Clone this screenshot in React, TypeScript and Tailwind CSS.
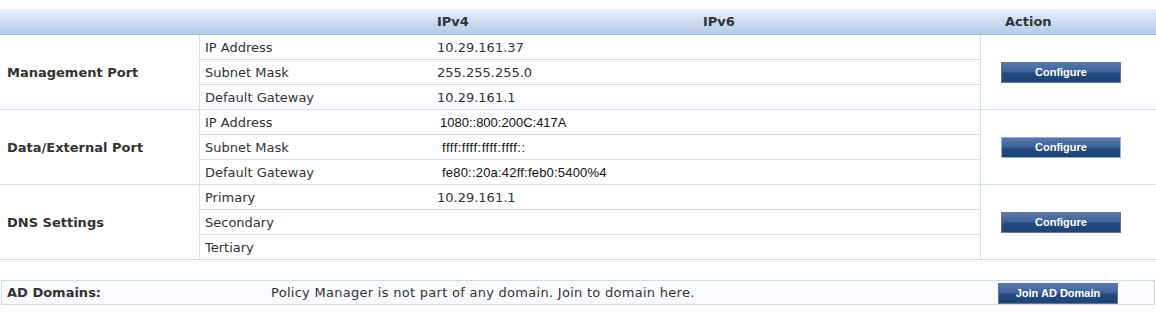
import React from "react";

const font = { fontFamily: '"DejaVu Sans", Verdana, sans-serif' };

function Btn({ label, focus, w = "w-[120px]" }: { label: string; focus?: boolean; w?: string }) {
  return (
    <div
      className={`${w} h-[21px] flex items-center justify-center text-white font-bold text-[11px] border ${
        focus ? "border-[#8eb1e4]" : "border-[#66768c]"
      } bg-[linear-gradient(#5679ad_0%,#3f639b_45%,#234a80_55%,#1e4376_100%)]`}
      style={{ fontFamily: '"Liberation Sans", Arial, sans-serif' }}
    >
      {label}
    </div>
  );
}

type Row = { label: string; value: string; v6?: boolean; off?: string };

function Section({ name, rows, focus }: { name: string; rows: Row[]; focus?: boolean }) {
  return (
    <div className="flex border-b border-[#d3dff0]">
      <div className="w-[200px] border-r border-[#d3dff0] flex items-center pl-[7px] pt-[1px] font-bold">{name}</div>
      <div className="w-[780px] flex flex-col">
        {rows.map((r, i) => (
          <div
            key={i}
            className={`flex items-center pl-[5px] pt-[2px] ${i < rows.length - 1 ? "h-[25px] border-b border-[#d3dff0]" : "h-[24px]"}`}
          >
            <div className="w-[232px]">{r.label}</div>
            <div
              className={r.off ?? ""}
              style={r.v6 ? { fontFamily: '"Liberation Sans", Arial, sans-serif', color: "#111" } : undefined}
            >
              {r.value}
            </div>
          </div>
        ))}
      </div>
      <div className="flex-1 border-l border-[#d3dff0] flex items-center pl-[20px]">
        <Btn label="Configure" focus={focus} />
      </div>
    </div>
  );
}

export default function App() {
  return (
    <div className="w-[1156px] h-[321px] bg-white pt-[9px] text-[13px] text-[#333]" style={font}>
      <div className="flex items-center h-[26px] pt-[1px] border-b border-[#a4b4ca] bg-[linear-gradient(#e7eff9,#b3cae9)] font-bold text-[#333]">
        <div className="w-[437px]" />
        <div className="w-[266px]">IPv4</div>
        <div className="w-[302px]">IPv6</div>
        <div>Action</div>
      </div>
      <Section
        name="Management Port"
        rows={[
          { label: "IP Address", value: "10.29.161.37" },
          { label: "Subnet Mask", value: "255.255.255.0" },
          { label: "Default Gateway", value: "10.29.161.1" },
        ]}
      />
      <Section
        name="Data/External Port"
        focus
        rows={[
          { label: "IP Address", value: "1080::800:200C:417A", v6: true, off: "pl-[3px]" },
          { label: "Subnet Mask", value: "ffff:ffff:ffff:ffff::", v6: true, off: "pl-[5px] tracking-[0.5px]" },
          { label: "Default Gateway", value: "fe80::20a:42ff:feb0:5400%4", v6: true, off: "pl-[5px] tracking-[0.2px]" },
        ]}
      />
      <Section
        name="DNS Settings"
        rows={[
          { label: "Primary", value: "10.29.161.1" },
          { label: "Secondary", value: "" },
          { label: "Tertiary", value: "" },
        ]}
      />
      <div className="mt-[20px] mx-[1px] h-[25px] border border-[#d0dcee] bg-[#fafbfe] flex items-center">
        <div className="w-[269px] pl-[5px] font-bold">AD Domains:</div>
        <div className="w-[727px] tracking-[0.28px]">Policy Manager is not part of any domain. Join to domain here.</div>
        <div className="pt-[2px]">
          <Btn label="Join AD Domain" w="w-[120px]" />
        </div>
      </div>
    </div>
  );
}
